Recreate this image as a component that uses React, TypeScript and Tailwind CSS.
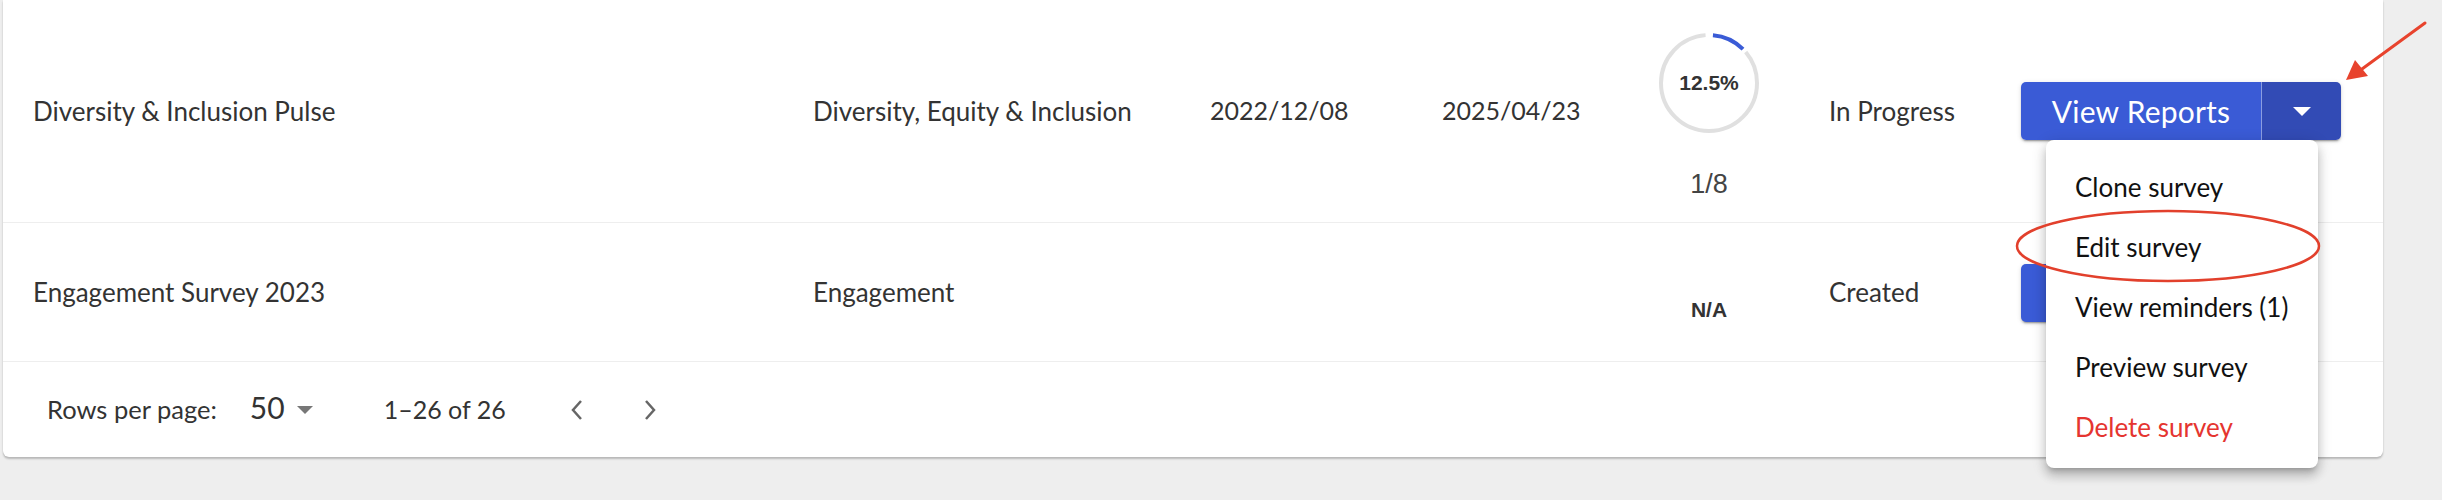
import React from "react";

function Ring() {
  const r = 48;
  const c = 2 * Math.PI * r;
  const blue = c * 0.125 - 4;
  const gap = 4;
  return (
    <svg width="102" height="102" viewBox="0 0 102 102" className="block">
      <circle
        cx="51"
        cy="51"
        r={r}
        fill="none"
        stroke="#e0e0e0"
        strokeWidth="4"
        strokeDasharray={`${c - blue - gap * 3} ${c}`}
        strokeDashoffset={-(blue + gap * 2)}
        transform="rotate(-90 51 51)"
      />
      <circle
        cx="51"
        cy="51"
        r={r}
        fill="none"
        stroke="#3a5bd6"
        strokeWidth="4"
        strokeDasharray={`${blue} ${c}`}
        strokeDashoffset={-gap}
        transform="rotate(-90 51 51)"
      />
    </svg>
  );
}

export default function App() {
  const cell = "flex items-center text-[26px] text-[#333333]";
  const dateCell = "flex items-center text-[25px] text-[#333333]";
  return (
    <div className="relative w-[2442px] h-[500px] overflow-hidden bg-[#eeeeee] font-['Lato',sans-serif]">
      <div className="ml-[3px] w-[2380px] bg-white rounded-b-[6px] shadow-[0_2px_2px_rgba(0,0,0,0.22),0_0_1px_rgba(0,0,0,0.15)]">
        {/* Row 1 */}
        <div className="grid grid-cols-[780px_397px_232px_227px_140px_212px_392px] h-[223px] border-b border-[#eeeeee]">
          <div className={`${cell} pl-[30px]`}>Diversity &amp; Inclusion Pulse</div>
          <div className={`${cell} pl-[30px]`}>Diversity, Equity &amp; Inclusion</div>
          <div className={`${dateCell} pl-[30px]`}>2022/12/08</div>
          <div className={`${dateCell} pl-[30px]`}>2025/04/23</div>
          <div className="flex flex-col items-center justify-center pt-[7px]">
            <div className="relative w-[102px] h-[102px]">
              <Ring />
              <div className="absolute inset-0 flex items-center justify-center font-['Liberation_Sans',Arial,sans-serif] font-bold text-[21px] text-[#333333]">
                12.5%
              </div>
            </div>
            <div className="mt-[37px] font-['Liberation_Sans',Arial,sans-serif] text-[27px] leading-none text-[#444444]">
              1/8
            </div>
          </div>
          <div className={`${cell} pl-[50px]`}>In Progress</div>
          <div className="flex items-center pl-[30px]">
            <div className="flex h-[58px] rounded-[5px] overflow-hidden shadow-[0_3px_1px_-2px_rgba(0,0,0,0.2),0_2px_2px_0_rgba(0,0,0,0.14),0_1px_5px_0_rgba(0,0,0,0.12)]">
              <div className="w-[240px] flex items-center justify-center bg-[#3a5bd6] text-white text-[30px] tracking-[0.2px]">
                View Reports
              </div>
              <div className="w-[1px] bg-[#8b9de0]"></div>
              <div className="w-[79px] flex items-center justify-center bg-[#324bb5]">
                <svg width="18" height="9" viewBox="0 0 18 9">
                  <path d="M0 0 L18 0 L9 9 Z" fill="#ffffff" />
                </svg>
              </div>
            </div>
          </div>
        </div>
        {/* Row 2 */}
        <div className="grid grid-cols-[780px_397px_232px_227px_140px_212px_392px] h-[139px] border-b border-[#eeeeee]">
          <div className={`${cell} pl-[30px]`}>Engagement Survey 2023</div>
          <div className={`${cell} pl-[30px]`}>Engagement</div>
          <div className={`${cell} pl-[30px]`}></div>
          <div className={`${cell} pl-[30px]`}></div>
          <div className="flex items-center justify-center pt-[36px] font-['Liberation_Sans',Arial,sans-serif] font-bold text-[21px] text-[#333333]">
            N/A
          </div>
          <div className={`${cell} pl-[50px]`}>Created</div>
          <div className="flex items-center pl-[30px] pt-[2px]">
            <div className="w-[230px] h-[58px] rounded-[5px] bg-[#3a5bd6] shadow-[0_3px_1px_-2px_rgba(0,0,0,0.2),0_2px_2px_0_rgba(0,0,0,0.14),0_1px_5px_0_rgba(0,0,0,0.12)]"></div>
          </div>
        </div>
        {/* Pagination */}
        <div className="flex items-center h-[95px] text-[25.5px] text-[#333333]">
          <span className="ml-[44px]">Rows per page:</span>
          <span className="ml-[33px] text-[30px] -mt-[5px]">50</span>
          <svg className="ml-[12px]" width="16" height="8" viewBox="0 0 16 8">
            <path d="M0 0 L16 0 L8 8 Z" fill="#777777" />
          </svg>
          <span className="ml-[71px] text-[25px]">1–26 of 26</span>
          <svg className="ml-[64px]" width="14" height="22" viewBox="0 0 14 22">
            <path d="M11 2 L3 11 L11 20" fill="none" stroke="#666666" strokeWidth="2.5" />
          </svg>
          <svg className="ml-[59px]" width="14" height="22" viewBox="0 0 14 22">
            <path d="M3 2 L11 11 L3 20" fill="none" stroke="#666666" strokeWidth="2.5" />
          </svg>
        </div>
      </div>

      {/* Dropdown menu */}
      <div className="absolute left-[2046px] top-[140px] w-[272px] h-[328px] bg-white rounded-[8px] pt-[17px] pb-[11px] shadow-[0_5px_5px_-3px_rgba(0,0,0,0.2),0_8px_10px_1px_rgba(0,0,0,0.14),0_3px_14px_2px_rgba(0,0,0,0.12)]">
        {[
          "Clone survey",
          "Edit survey",
          "View reminders (1)",
          "Preview survey",
        ].map((t) => (
          <div key={t} className="h-[60px] flex items-center pl-[29px] text-[26px] text-[#111111]">
            {t}
          </div>
        ))}
        <div className="h-[60px] flex items-center pl-[29px] text-[26px] text-[#e53530]">Delete survey</div>
      </div>

      {/* Annotations */}
      <svg className="absolute left-0 top-0 pointer-events-none" width="2442" height="500" viewBox="0 0 2442 500">
        <ellipse cx="2168" cy="246" rx="151" ry="35" fill="none" stroke="#e2402c" strokeWidth="2.5" />
        <line x1="2425" y1="23" x2="2362" y2="69" stroke="#e8432d" strokeWidth="3" strokeLinecap="round" />
        <polygon points="2346,80 2355,60 2368,76" fill="#e8432d" />
      </svg>
    </div>
  );
}
